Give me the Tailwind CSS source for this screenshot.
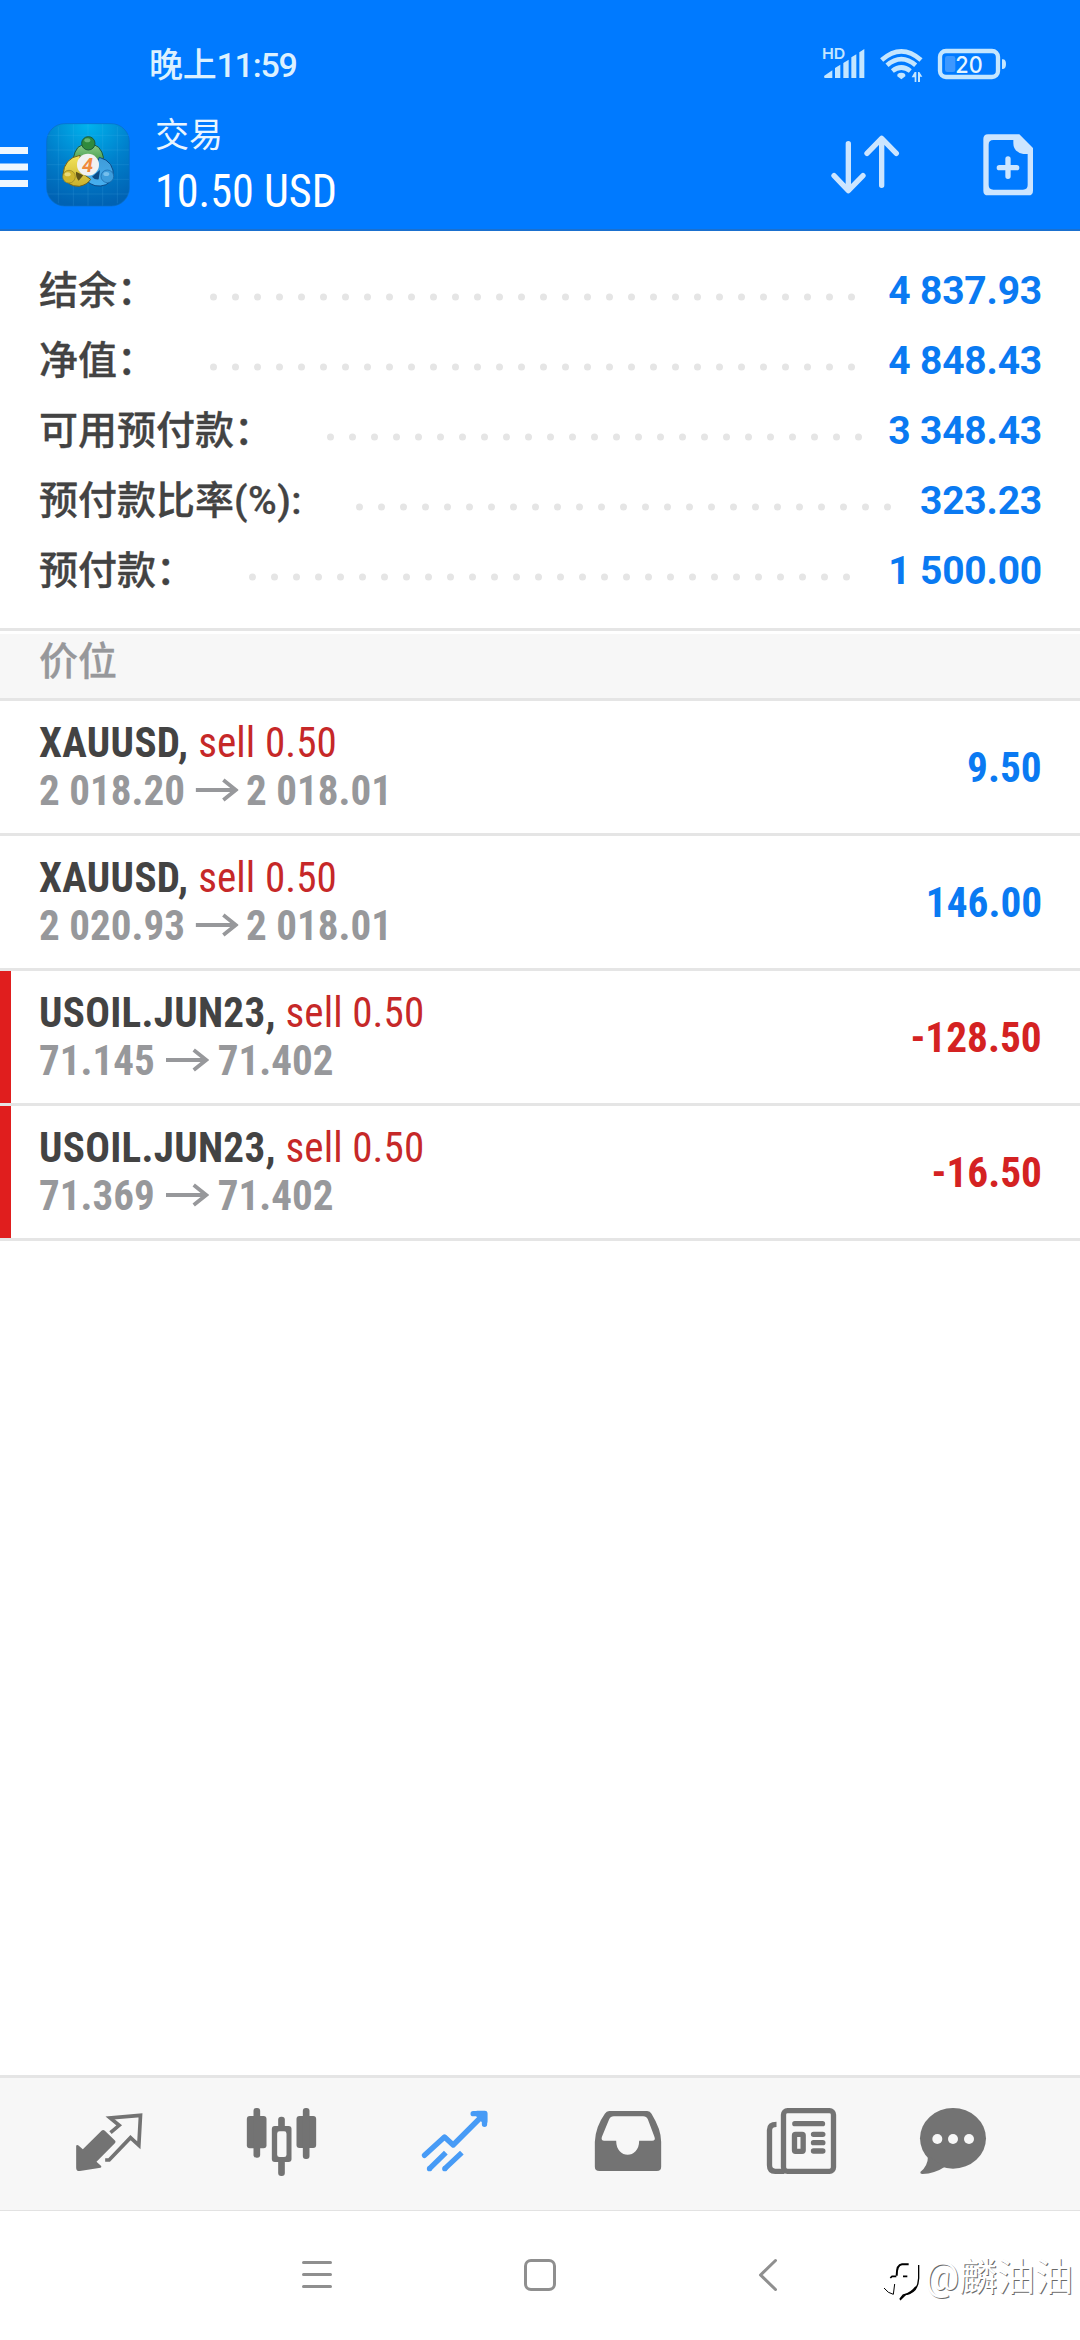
<!DOCTYPE html>
<html lang="zh-CN">
<head>
<meta charset="utf-8">
<title>交易</title>
<script src="https://cdn.jsdelivr.net/npm/@tailwindcss/browser@4"></script>
</head>
<body class="bg-white">
<div class="relative flex h-[2340px] w-[1080px] flex-col overflow-hidden bg-white font-['Roboto','Noto_Sans_CJK_SC',sans-serif]">

  <header class="flex h-[231px] flex-col border-b-2 border-[#1a70cf] bg-[#007aff]">
    <!-- Status bar -->
    <div class="flex h-[101px] items-start justify-between pl-[149px] pr-[72px]">
      <div class="pt-[41px] text-[34px] leading-[48px] font-medium tracking-[-0.3px] text-[#dcf1ff]">晚上<span class="tracking-[-1.2px]">11:59</span></div>
      <svg class="mt-[44px] h-[40px] w-[188px]" viewBox="120 42 564 120" fill="#c4e6ff">
        <text x="126" y="87" font-family="Inter, sans-serif" font-weight="600" font-size="45" textLength="70" lengthAdjust="spacingAndGlyphs">HD</text>
        <path d="M135 144Q130 143 133 137L157 121V144ZM165 144V114L181 104V144ZM190 144V99L206 89V144ZM214 144V82L229 73V144ZM238 144V67L253 57V144Z"/>
        <g fill="none" stroke="#c4e6ff" stroke-width="14">
          <path d="M305 90Q364 38 423 90"/><path d="M321 106Q364 69 407 106"/><path d="M337 123Q364 102 391 123"/>
        </g>
        <path d="M364 148L352 139Q350 128 364 128T376 139Z"/>
        <path d="M395 142L404 126H409V156H404V142ZM427 140H420V156H414V126H418Z"/>
        <rect x="480" y="63" width="174" height="78" rx="18" fill="none" stroke="#c4e6ff" stroke-width="13"/>
        <path d="M666 88Q678 86 678 102T666 117Z"/>
        <rect x="495" y="78" width="31" height="48" rx="7" fill="#3d98ff"/>
        <text x="526" y="128" font-family="Inter, sans-serif" font-weight="500" font-size="68" fill="#e6f5ff" textLength="82" lengthAdjust="spacingAndGlyphs">20</text>
      </svg>
    </div>
    <!-- Action bar -->
    <div class="flex h-[128px] items-start">
      <svg class="mt-[45px] h-[42px] w-[28px]" viewBox="0 0 28 42" fill="#eef7ff"><path d="M0 1H28V8H0ZM0 17.500H28V24.500H0ZM0 34H28V41H0Z"/></svg>
      <svg class="mt-[22px] ml-[18px] h-[84px] w-[84px]" viewBox="138 279 252 252">
        <defs>
          <radialGradient id="bg" cx=".5" cy="0" r="1"><stop offset="0" stop-color="#00b4ee"/><stop offset=".55" stop-color="#007fcb"/><stop offset="1" stop-color="#0062b3"/></radialGradient>
          <linearGradient id="gr" x2="0" y2="1"><stop stop-color="#8fd08a"/><stop offset="1" stop-color="#2b8a3a"/></linearGradient>
          <linearGradient id="ye" x2="0" y2="1"><stop stop-color="#f3e45a"/><stop offset="1" stop-color="#c9b02c"/></linearGradient>
          <linearGradient id="bl" x2="0" y2="1"><stop stop-color="#3f9bd8"/><stop offset="1" stop-color="#47b0f0"/></linearGradient>
        </defs>
        <rect x="140" y="281" width="248" height="247" rx="54" fill="url(#bg)" stroke="#0a6cc4" stroke-width="2"/>
        <path d="M175 290V520M220 282V527M264 282V527M308 282V527M352 290V520M141 316H387M141 360H387M141 404H387M141 448H387M141 492H387" stroke="#5fc0f0" stroke-opacity=".22" stroke-width="2"/>
        <path d="M226 410Q212 380 234 352Q265 328 296 352Q320 380 304 412Z" fill="url(#gr)" stroke="#1c5a3a" stroke-width="3"/>
        <path d="M298 382Q344 394 340 442Q322 474 285 467Q258 458 246 436L280 425Z" fill="url(#bl)" stroke="#0c4a86" stroke-width="3"/>
        <path d="M240 376Q192 384 189 434Q200 470 238 469Q262 464 272 448L240 425Z" fill="url(#ye)" stroke="#6e611c" stroke-width="3"/>
        <path d="M236 452Q226 440 228 425L250 436Z" fill="#5e5418"/>
        <path d="M296 448Q284 450 276 440L300 420Z" fill="#0c4a86"/>
        <circle cx="265" cy="340" r="20" fill="#2f8a3c" stroke="#1c5a3a" stroke-width="3"/>
        <ellipse cx="262" cy="331" rx="9" ry="6" fill="#8fd39a" fill-opacity=".6"/>
        <circle cx="207" cy="440" r="19" fill="#d0b62c" stroke="#8e7d22" stroke-width="2"/>
        <ellipse cx="203" cy="433" rx="9" ry="6" fill="#f4ea9a" fill-opacity=".7"/>
        <circle cx="322" cy="439" r="19" fill="#3d9ddc" stroke="#1a67a8" stroke-width="2"/>
        <ellipse cx="319" cy="432" rx="9" ry="6" fill="#9bd6f8" fill-opacity=".6"/>
        <circle cx="264" cy="404" r="33" fill="#f1f1f1"/>
        <text x="263" y="425" text-anchor="middle" font-family="Roboto, sans-serif" font-style="italic" font-weight="700" font-size="60" fill="#f08a3c">4</text>
      </svg>
      <div class="ml-[25px] flex flex-1 flex-col items-start">
        <div class="mt-[10px] h-[48px] text-[34px] leading-[48px] text-[#e9f5ff]">交易</div>
        <div class="mt-[2px] origin-left scale-x-[0.94] text-[47px] leading-[60px] text-white [font-stretch:75%]">10.50 USD</div>
      </div>
      <svg class="mt-[29px] h-[70px] w-[80px]" viewBox="141 300 240 210" fill="none" stroke="#cce5ff" stroke-width="16" stroke-linecap="round" stroke-linejoin="round">
        <path d="M205 341V481M162 437L205 482L249 437M305 466V326M261 370L305 325L349 370"/>
      </svg>
      <svg class="mt-[29px] mr-[40px] ml-[73px] h-[70px] w-[60px]" viewBox="600 300 180 210" fill="#cce5ff">
        <path fill-rule="evenodd" d="M624 313H718L759 354V482Q759 496 745 496H624Q610 496 610 482V327Q610 313 624 313ZM640 330Q626 330 626 344V465Q626 479 640 479H729Q743 479 743 465V372H730Q700 366 700 340V330Z"/>
        <path d="M658 413H710M684 387V439" stroke="#cce5ff" stroke-width="16" stroke-linecap="round"/>
      </svg>
    </div>
  </header>

  <!-- Account summary -->
  <section class="flex h-[397px] flex-col pt-[25px] text-[39px] text-[#434343]">
    <div class="flex h-[70px] items-center justify-between pr-[38px] pl-[39px]"><span class="w-[171px] font-medium [-webkit-text-stroke:0.3px_#434343]">结余：</span><svg class="mt-[11px] h-[8px] flex-1" stroke="#e5e5e5" stroke-width="7" stroke-linecap="round" stroke-dasharray="0 22"><path d="M3.500 4H642.500"/></svg><span class="font-bold tracking-[-0.2px] text-[#0a7af2]">4 837.93</span></div>
    <div class="flex h-[70px] items-center justify-between pr-[38px] pl-[39px]"><span class="w-[171px] font-medium [-webkit-text-stroke:0.3px_#434343]">净值：</span><svg class="mt-[11px] h-[8px] flex-1" stroke="#e5e5e5" stroke-width="7" stroke-linecap="round" stroke-dasharray="0 22"><path d="M3.500 4H642.500"/></svg><span class="font-bold tracking-[-0.2px] text-[#0a7af2]">4 848.43</span></div>
    <div class="flex h-[70px] items-center justify-between pr-[38px] pl-[39px]"><span class="w-[288px] font-medium [-webkit-text-stroke:0.3px_#434343]">可用预付款：</span><svg class="mt-[11px] h-[8px] flex-1" stroke="#e5e5e5" stroke-width="7" stroke-linecap="round" stroke-dasharray="0 22"><path d="M3.500 4H532.500"/></svg><span class="font-bold tracking-[-0.2px] text-[#0a7af2]">3 348.43</span></div>
    <div class="flex h-[70px] items-center justify-between pr-[38px] pl-[39px]"><span class="w-[317px] font-medium [-webkit-text-stroke:0.3px_#434343]">预付款比率<span class="tracking-[0.5px]">(%):</span></span><svg class="mt-[11px] h-[8px] flex-1" stroke="#e5e5e5" stroke-width="7" stroke-linecap="round" stroke-dasharray="0 22"><path d="M3.500 4H532.500"/></svg><span class="font-bold tracking-[-0.2px] text-[#0a7af2]">323.23</span></div>
    <div class="flex h-[70px] items-center justify-between pr-[38px] pl-[39px]"><span class="w-[210px] font-medium [-webkit-text-stroke:0.3px_#434343]">预付款：</span><svg class="mt-[11px] h-[8px] flex-1" stroke="#e5e5e5" stroke-width="7" stroke-linecap="round" stroke-dasharray="0 22"><path d="M3.500 4H598.500"/></svg><span class="font-bold tracking-[-0.2px] text-[#0a7af2]">1 500.00</span></div>
  </section>

  <!-- Positions -->
  <div class="border-t-[3px] border-[#e5e5e5] pt-[3px]">
    <div class="h-[67px] border-b-[3px] border-[#e5e5e5] bg-[#f7f7f7] pl-[39px] text-[39px] leading-[56px] font-medium text-[#97989b] [-webkit-text-stroke:0.3px_#97989b]">价位</div>
  </div>
  <section class="flex flex-1 flex-col text-[43px] leading-[48px] font-bold [font-stretch:75%]">
    <div class="flex h-[135px] items-center justify-between border-b-[3px] border-[#e5e5e5] pr-[38px] pl-[39px]">
      <div class="origin-left scale-x-[0.955] pb-[2px]"><div class="tracking-[0.35px] text-[#434343]">XAUUSD, <span class="font-normal tracking-[0.1px] text-[#c62828]">sell 0.50</span></div>
      <div class="flex text-[#97989b]">2 018.20<svg class="mt-[12px] mr-[8px] ml-[11px] h-[24px] w-[45px]" viewBox="0 0 45 24" fill="none" stroke="#97989b" stroke-width="4"><path d="M0 12H42M29 2L42 12L29 22"/></svg>2 018.01</div></div>
      <div class="origin-right scale-x-[0.96] text-[#0a7af2]">9.50</div>
    </div>
    <div class="flex h-[135px] items-center justify-between border-b-[3px] border-[#e5e5e5] pr-[38px] pl-[39px]">
      <div class="origin-left scale-x-[0.955] pb-[2px]"><div class="tracking-[0.35px] text-[#434343]">XAUUSD, <span class="font-normal tracking-[0.1px] text-[#c62828]">sell 0.50</span></div>
      <div class="flex text-[#97989b]">2 020.93<svg class="mt-[12px] mr-[8px] ml-[11px] h-[24px] w-[45px]" viewBox="0 0 45 24" fill="none" stroke="#97989b" stroke-width="4"><path d="M0 12H42M29 2L42 12L29 22"/></svg>2 018.01</div></div>
      <div class="origin-right scale-x-[0.96] text-[#0a7af2]">146.00</div>
    </div>
    <div class="flex h-[135px] items-stretch border-b-[3px] border-[#e5e5e5]">
      <div class="w-[11px] bg-[#e01e1e]"></div>
      <div class="flex flex-1 items-center justify-between pr-[38px] pl-[28px]">
      <div class="origin-left scale-x-[0.955] pb-[2px]"><div class="tracking-[0.3px] text-[#434343]">USOIL.JUN23, <span class="font-normal tracking-[0.1px] text-[#c62828]">sell 0.50</span></div>
      <div class="flex text-[#97989b]">71.145<svg class="mt-[12px] mr-[9px] ml-[12px] h-[24px] w-[45px]" viewBox="0 0 45 24" fill="none" stroke="#97989b" stroke-width="4"><path d="M0 12H42M29 2L42 12L29 22"/></svg>71.402</div></div>
      <div class="origin-right scale-x-[0.96] text-[#d42222]">-128.50</div></div>
    </div>
    <div class="flex h-[135px] items-stretch border-b-[3px] border-[#e5e5e5]">
      <div class="w-[11px] bg-[#e01e1e]"></div>
      <div class="flex flex-1 items-center justify-between pr-[38px] pl-[28px]">
      <div class="origin-left scale-x-[0.955] pb-[2px]"><div class="tracking-[0.3px] text-[#434343]">USOIL.JUN23, <span class="font-normal tracking-[0.1px] text-[#c62828]">sell 0.50</span></div>
      <div class="flex text-[#97989b]">71.369<svg class="mt-[12px] mr-[9px] ml-[12px] h-[24px] w-[45px]" viewBox="0 0 45 24" fill="none" stroke="#97989b" stroke-width="4"><path d="M0 12H42M29 2L42 12L29 22"/></svg>71.402</div></div>
      <div class="origin-right scale-x-[0.96] text-[#d42222]">-16.50</div></div>
    </div>
  </section>

  <!-- Tab bar -->
  <nav class="grid h-[136px] grid-cols-[repeat(5,173px)_132px] items-center justify-items-center border-t-[3px] border-b border-t-[#e5e5e5] border-b-[#e2e2e2] bg-[#f7f7f7] pl-[22px]">
    <svg class="size-[80px]" viewBox="85.500 132 240 240" fill="#737373">
      <path d="M183 212Q188 208 193 212L224 242Q227 246 223 250L168 305L182 318Q184 322 180 323L118 333Q107 334 107 323V258Q108 253 113 256L127 268Z"/>
      <path d="M210 218L236 196L209 174L300 166L295 256L270 233L206 300H194" fill="none" stroke="#737373" stroke-width="11"/>
    </svg>
    <svg class="size-[80px]" viewBox="604.500 132 240 240" fill="#737373">
      <rect x="619" y="168" width="59" height="97" rx="9"/><rect x="639" y="144" width="20" height="149" rx="9"/>
      <rect x="768" y="168" width="59" height="96" rx="9"/><rect x="787" y="144" width="20" height="153" rx="9"/>
      <rect x="713" y="170" width="20" height="178" rx="9"/><rect x="694" y="198" width="59" height="108" rx="9"/>
      <rect x="710" y="214" width="28" height="77" rx="7" fill="#f7f7f7"/>
    </svg>
    <svg class="size-[80px]" viewBox="1123.500 132 240 240" fill="none" stroke="#479bf6" stroke-width="16" stroke-linejoin="round">
      <path stroke-linecap="round" d="M1152 286L1212 231L1238 255L1328 165M1298 161H1332V193"/>
      <path d="M1310 160H1333V184Z" fill="#479bf6"/>
      <path d="M1167 326L1216 278M1213 326L1264 278"/>
      <g fill="#479bf6" stroke="none"><circle cx="1167" cy="326" r="8"/><circle cx="1213" cy="326" r="8"/></g>
    </svg>
    <svg class="size-[80px]" viewBox="82.500 132 240 240" fill="#737373">
      <path fill-rule="evenodd" d="M146 153H260Q269 153 273 161Q302 208 302 245V320Q302 333 289 333H117Q103 333 103 320V245Q105 200 133 161Q138 153 146 153ZM160 169Q150 169 146 178L124 231Q121 242 131 242H167C167 298 236 298 236 242H275Q286 242 282 231L262 178Q258 169 248 169Z"/>
    </svg>
    <svg class="size-[80px]" viewBox="601.500 132 240 240" fill="none" stroke="#737373" stroke-width="16">
      <rect x="669" y="152" width="150" height="182" rx="12"/>
      <path d="M648 193Q627 193 627 210V316Q627 334 644 334H672" />
      <path d="M703 191H786M759 223H787M759 248H787M759 273H787" stroke-linecap="round"/>
      <rect x="702" y="223" width="26" height="51" rx="3" stroke-width="16"/>
    </svg>
    <svg class="size-[80px]" viewBox="1059 132 240 240" fill="#737373">
      <ellipse cx="1179" cy="235" rx="99" ry="91"/>
      <path d="M1104 288Q1104 318 1081 336Q1080 342 1087 342Q1125 340 1155 320Z"/>
      <g fill="#f7f7f7"><circle cx="1132" cy="237" r="15"/><circle cx="1179" cy="237" r="15"/><circle cx="1227" cy="237" r="15"/></g>
    </svg>
  </nav>

  <!-- System navigation -->
  <div class="flex h-[129px] items-start pt-[46px] pl-[302px]">
    <svg class="h-[36px] w-[30px]" fill="none" stroke="#8f8f8f" stroke-width="3" stroke-linecap="round"><path d="M1.500 5.500H28.500M1.500 17.500H28.500M1.500 29.500H28.500"/></svg>
    <svg class="ml-[191px] h-[36px] w-[34px]" fill="none" stroke="#8f8f8f" stroke-width="3"><rect x="2.500" y="3.500" width="29" height="29" rx="5.500"/></svg>
    <svg class="ml-[201px] h-[36px] w-[20px]" fill="none" stroke="#8f8f8f" stroke-width="3" stroke-linecap="round" stroke-linejoin="round"><path d="M17.500 3.500L2.500 18L17.500 32.500"/></svg>
  </div>

  <!-- Watermark -->
  <div class="absolute right-[7px] bottom-[38px] flex items-center">
    <svg class="mt-[8px] mr-[3px] h-[42px] w-[40px]" viewBox="120 190 120 126" fill="none" stroke="#000" stroke-linejoin="round">
      <path d="M164 237Q164 204 180 203H200" stroke-width="6"/><path d="M145 244L150 239H163M183 239H196" stroke-width="5"/>
      <path d="M230 205V245Q228 288 190 294L174 310" stroke-width="4"/><path d="M222 270Q208 290 184 295L174 308" stroke-width="5"/><path d="M158 262L154 293Q138 290 126 274" stroke-width="3"/>
    </svg>
    <span class="text-[38px] leading-[48px] text-white [text-shadow:1px_1px_0_#6a6a6a]">@麟油油</span>
  </div>
</div>
</body>
</html>
